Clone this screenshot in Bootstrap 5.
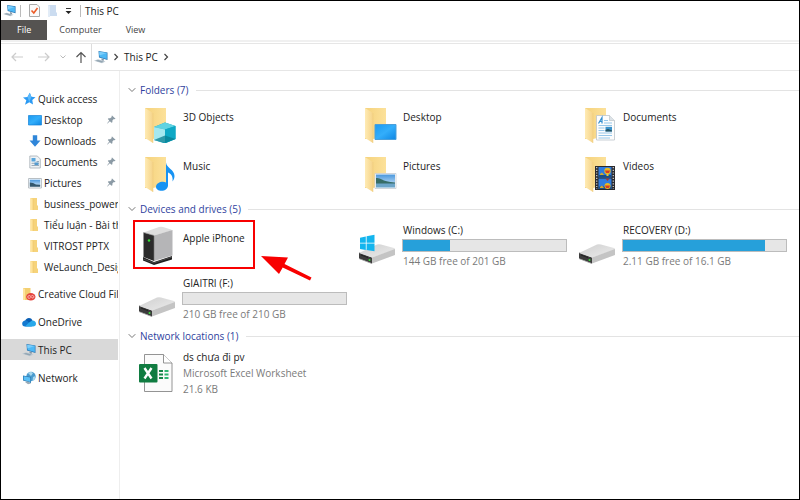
<!DOCTYPE html>
<html lang="en">
<head>
<meta charset="utf-8">
<meta name="viewport" content="width=device-width, initial-scale=1">
<title>This PC</title>
<link rel="stylesheet" href="https://cdn.jsdelivr.net/npm/bootstrap@5.3.0/dist/css/bootstrap.min.css">
<style>
body { font: 10px/14px "Open Sans", "Noto Sans", sans-serif; color: #222; background: #fff; }
svg { display: block; flex: none; }
button { font: inherit; color: inherit; background: none; border: 0; padding: 0; }
.explorer { border: 1px solid #000; }
.titlebar { height: 19px; padding-left: 2px; }
.titlebar h1 { font-size: 10px; line-height: 14px; font-weight: 400; margin: 0 0 0 4px; }
.vsep { width: 1px; height: 12px; background: #bbb; }
.ribbon { height: 22px; font-size: 9px; line-height: 18px; border-bottom: 2px solid #f0f0f0; margin-bottom: 1px; }
.ribbon .nav-link { height: 20px; padding: 1px 12px; color: #444; border-radius: 0; }
.ribbon .nav-link.active { background: #555351; color: #fff; padding: 1px 16px; }
.addressrow { height: 28px; border-top: 1px solid #e6e6e6; border-bottom: 1px solid #e6e6e6; padding-left: 9px; }
.navbuttons { width: 81px; }
.address { border-left: 1px solid #ddd; padding-left: 2px; }
.address a { color: #222; text-decoration: none; }
.tree { width: 119px; padding: 17px 1px 0 0; border-right: 1px solid #eee; }
.tree ul { list-style: none; margin: 0; padding: 0; }
.tree a { display: flex; align-items: center; height: 21px; padding-left: 21px; color: #222; text-decoration: none; white-space: nowrap; overflow: hidden; }
.tree a svg:first-child { width: 14px; height: 14px; margin-right: 2px; }
.tree li li a { padding-left: 27px; }
.tree li li a svg:first-child { margin-right: 2px; }
.tree a svg.pin { margin-left: auto; margin-right: 2px; }
.tree > ul > li + li { margin-top: 7px; }
.tree > ul > li:nth-child(2) { margin-top: 6px; }
.tree a.active { background: #d9d9d9; }
.content-pane { padding: 9px 0 0 7px; }
.group-head { height: 20px; padding-left: 1px; }
.group-head h2 { font-size: 10px; line-height: 14px; font-weight: 400; margin: 0 7px 0 4px; color: #2f3f9e; }
.group-head span { height: 1px; background: #e3e3e3; }
.tiles { display: grid; grid-template-columns: repeat(auto-fill, 220px); padding: 4px 0 5px 4px; row-gap: 8px; }
.tiles.folders { padding: 7px 0 7px 4px; row-gap: 13px; }
.tile { display: flex; position: relative; min-height: 45px; }
.folders .tile { min-height: 36px; }
.tile > svg:first-child { width: 40px; height: 40px; margin: 3px 6px 0; }
.folders .tile > svg:first-child { margin-top: 0; height: 36px; }
.folders .tile-text { padding-top: 3px; }
.phone .tile-text { padding-top: 8px; }
.usage { display: flex; flex-direction: column; gap: 2px; }
.usage .progress { width: 165px; height: 13px; margin-left: -1px; border-radius: 0; border: 1px solid #bcbcbc; background: #e6e6e6; }
.usage .progress-bar { background: #26a0da; }
.muted { color: #7a7a7a; }
.highlight { position: absolute; left: 2px; top: -3px; width: 122px; height: 49px; border: 2px solid #f80000; }
.pointer { position: absolute; left: 129px; top: 31px; }
</style>
<script src="https://cdn.jsdelivr.net/npm/bootstrap@5.3.0/dist/js/bootstrap.bundle.min.js"></script>
</head>
<body>
<svg width="0" height="0" class="position-absolute" aria-hidden="true">
  <defs>
    <linearGradient id="gBlue" x1="0" y1="0" x2="1" y2="1"><stop offset="0" stop-color="#1c9af0"/><stop offset=".5" stop-color="#33aefb"/><stop offset="1" stop-color="#0d86e3"/></linearGradient>
    <linearGradient id="gFold" x1="0" y1="0" x2="1" y2="0"><stop offset="0" stop-color="#f5d27c"/><stop offset="1" stop-color="#fce19a"/></linearGradient>
    <linearGradient id="gFlap" x1="0" y1="0" x2="1" y2="0"><stop offset="0" stop-color="#ffebb4"/><stop offset="1" stop-color="#f5d388"/></linearGradient>
    <linearGradient id="gTop" x1="0" y1="0" x2="1" y2="1"><stop offset="0" stop-color="#cfcfcf"/><stop offset="1" stop-color="#ececec"/></linearGradient>
    <linearGradient id="gSky" x1="0" y1="0" x2="0" y2="1"><stop offset="0" stop-color="#4a97dc"/><stop offset="1" stop-color="#dcefff"/></linearGradient>
  </defs>
  <symbol id="pc" viewBox="0 0 14 14"><path d="M4.500 1 13.500 2.500v7.500L5 7.500z" fill="#2b78b5"/><path d="M5.200 1.800 12.800 3.100v5.900L5.700 7z" fill="#4db8f5"/><path d="M5.200 1.800 12.800 3.100 5.400 5.600z" fill="#7ccefb"/><path d="M7.500 8.500l2.500.8L9.500 11l-2-.5z" fill="#8497a6"/><path d="M0 10.700 4 9.300l7.500 2.200L8 13.200z" fill="#bcc8d1"/><path d="M1.500 10.800 4 9.900l5.500 1.600-2 .9z" fill="#93a5b2"/></symbol>
  <symbol id="smallfolder" viewBox="0 0 14 14"><path d="M2.500 1H9v7l1 1v4H2.500z" fill="#f6d37b"/><path d="M2.500 1 5 2v11H2.500z" fill="#ffe49c"/><path d="M5 2v11" stroke="#ecc566" stroke-width=".6"/></symbol>
  <symbol id="pinsym" viewBox="0 0 10 10"><path d="M5.600.5 9.500 4.300 8.500 4.800 7.600 4.500 6 6.200 6 8 5 8.600 3.200 6.900.5 9.500 0 9.500 2.500 6.200.9 4.500 1.600 3.700 3.500 3.700 5.300 2.200 5 1.200z" fill="#8b9aa5"/></symbol>
  <symbol id="bigfolder" viewBox="0 0 40 36"><path d="M8 1h21v28l-13 3H8z" fill="url(#gFold)"/><path d="M8 1l8 5v30l-8-5z" fill="url(#gFlap)"/><path d="M16 6v30" stroke="#ecca78" stroke-width=".5"/></symbol>
  <symbol id="drive" viewBox="0 0 40 40"><path d="M2 26.500 15 31.500v6L2 32.500z" fill="#3c3c3c"/><path d="M2 27 20 18.500q2-.7 4 0L37 22q2 1 0 2L15 31.500z" fill="url(#gTop)"/><path d="M15 31.500 38 23v6L15 37.500z" fill="#c4c4c4"/><path d="M2 32.300 15 37.300v.8L2 33z" fill="#999"/><circle cx="12.500" cy="34" r="1" fill="#3be03b"/><path d="M4 29l7 2.600" stroke="#222" stroke-width="1"/></symbol>
  <symbol id="chev" viewBox="0 0 8 8"><path d="M.7 2.200 4 5.500 7.300 2.200" fill="none" stroke="#777" stroke-width="1"/></symbol>
</svg>

<div class="explorer d-flex flex-column min-vh-100">
  <header>
    <div class="titlebar d-flex align-items-center">
      <svg width="13" height="13"><use href="#pc"/></svg>
      <span class="vsep ms-1"></span>
      <div class="d-flex align-items-center ms-2">
        <button type="button" aria-label="Properties"><svg width="11" height="13"><path d="M.5.500h7.500l2.500 2.500v9.500H.5z" fill="#fafafa" stroke="#aaa"/><path d="M2.500 6.500 4.800 9 8.500 4" fill="none" stroke="#ec5b27" stroke-width="1.600"/></svg></button>
        <button type="button" class="ms-2" aria-label="New folder"><svg width="9" height="12"><path d="M0 0h8v7l1 1v3H0z" fill="#cbdcf0"/><path d="M0 0l2 1v11H0z" fill="#e2ecf7"/></svg></button>
        <button type="button" class="ms-2" aria-label="Customize toolbar"><svg width="7" height="8"><path d="M1 1.500h5" stroke="#333"/><path d="M.5 4h6l-3 3z" fill="#222"/></svg></button>
      </div>
      <span class="vsep ms-2"></span>
      <h1>This PC</h1>
    </div>
    <nav class="ribbon nav" aria-label="Ribbon">
      <a class="nav-link active" href="#">File</a>
      <a class="nav-link" href="#">Computer</a>
      <a class="nav-link" href="#">View</a>
    </nav>
    <div class="addressrow d-flex">
      <div class="navbuttons d-flex align-items-center">
        <button type="button" aria-label="Back"><svg width="14" height="12"><path d="M13 6H2M6 2 2 6l4 4" fill="none" stroke="#ccc" stroke-width="1.200"/></svg></button>
        <button type="button" class="ms-auto" aria-label="Forward"><svg width="14" height="12"><path d="M1 6h11M8 2l4 4-4 4" fill="none" stroke="#ccc" stroke-width="1.200"/></svg></button>
        <button type="button" class="ms-2" aria-label="Recent locations"><svg width="8" height="6"><path d="M1.500 1.500 4 4l2.500-2.500" fill="none" stroke="#bbb"/></svg></button>
        <button type="button" class="ms-2 me-1" aria-label="Up"><svg width="12" height="12"><path d="M6 12V1.500M1.500 6 6 1.500 10.500 6" fill="none" stroke="#555" stroke-width="1.200"/></svg></button>
      </div>
      <div class="address d-flex align-items-center flex-grow-1">
        <svg width="14" height="14"><use href="#pc"/></svg>
        <svg class="ms-1" width="8" height="8"><path d="M2.500 1 5.500 4l-3 3" fill="none" stroke="#444" stroke-width="1.200"/></svg>
        <a href="#" class="ms-1">This PC</a>
        <svg class="ms-1" width="8" height="8"><path d="M2.500 1 5.500 4l-3 3" fill="none" stroke="#444" stroke-width="1.200"/></svg>
      </div>
    </div>
  </header>

  <div class="d-flex flex-grow-1">
    <nav class="tree flex-shrink-0" aria-label="Locations">
      <ul>
        <li><a href="#"><svg viewBox="0 0 14 14"><path d="M7.800.8 9.400 4.800 13.500 5.200 10.300 8 11 12.600 7.300 10.300 3 12.800 4.300 8.300 1 5.600 5.500 5z" fill="#2b9af3"/><path d="M7.800.8 9.400 4.800 7.300 10.300 5.500 5z" fill="#5bb9fb"/></svg>Quick access</a>
          <ul>
            <li><a href="#"><svg viewBox="0 0 14 14"><path d="M.5 2.500h13v9.500H.5z" fill="url(#gBlue)" stroke="#1583d8" stroke-width=".7"/></svg>Desktop<svg class="pin" width="9" height="9"><use href="#pinsym"/></svg></a></li>
            <li><a href="#"><svg viewBox="0 0 14 14"><path d="M4.800 1.300h4.400v5.200h3.300L7 12.700 1.500 6.500h3.300z" fill="#2f86d9"/></svg>Downloads<svg class="pin" width="9" height="9"><use href="#pinsym"/></svg></a></li>
            <li><a href="#"><svg viewBox="0 0 14 14"><path d="M1.800 1h7.500l3 3v9H1.800z" fill="#eef2f5" stroke="#a4adb5" stroke-width=".8"/><path d="M3.500 3h4v3.500h-4z" fill="#5aa7dd"/><path d="M8.500 6.500h2.500M3.500 8.300h7.500M3.500 10.500h7.500" stroke="#8197a9" stroke-width=".8"/><path d="M6.500 7.500h4v2.500h-4z" fill="#549bd0"/></svg>Documents<svg class="pin" width="9" height="9"><use href="#pinsym"/></svg></a></li>
            <li><a href="#"><svg viewBox="0 0 14 14"><path d="M.6 2.500h12.800v9.500H.6z" fill="#fff" stroke="#a6aeb5" stroke-width=".8"/><path d="M1.800 3.700h10.400v7H1.800z" fill="url(#gSky)"/><path d="M1.800 6.500 5 7l3 1.500 4.200.2v2H1.800z" fill="#34576c"/></svg>Pictures<svg class="pin" width="9" height="9"><use href="#pinsym"/></svg></a></li>
            <li><a href="#"><svg><use href="#smallfolder"/></svg>business_powerp</a></li>
            <li><a href="#"><svg><use href="#smallfolder"/></svg>Tiểu luận - Bài th</a></li>
            <li><a href="#"><svg><use href="#smallfolder"/></svg>VITROST PPTX</a></li>
            <li><a href="#"><svg><use href="#smallfolder"/></svg>WeLaunch_Desig</a></li>
          </ul>
        </li>
        <li><a href="#"><svg viewBox="0 0 14 14"><path d="M1 1h7.500v7l1 1v4H1z" fill="#f3cf72"/><path d="M1 1 3 2v11H1z" fill="#ffe49c"/><ellipse cx="8.800" cy="9.800" rx="4.700" ry="3.700" fill="#e5453d"/><path d="M8.700 10.500C7.500 12 5.500 11.300 5.800 9.800s2-1.600 3-.4l1 1.200c1 .9 2.300.2 2-1s-1.600-1.500-2.500-.6" fill="none" stroke="#ffd6d2" stroke-width=".8"/></svg>Creative Cloud File</a></li>
        <li><a href="#"><svg viewBox="0 0 14 14"><path d="M3 6.500C3.500 2.500 9 1.500 10.500 5.500L7 9z" fill="#0a5fb4"/><path d="M2.800 5.500C5 5 6.500 6.500 10 11.500H3C-.8 11.500-.6 6 2.800 5.500z" fill="#1379d0"/><path d="M6.500 8 10 5.500c2.500-.2 4 1.500 4 3.200 0 1.800-1.300 2.800-3 2.800H3z" fill="#28a8ea"/></svg>OneDrive</a></li>
        <li><a href="#" class="active" aria-current="page"><svg><use href="#pc"/></svg>This PC</a></li>
        <li><a href="#"><svg viewBox="0 0 14 14"><circle cx="9" cy="5.500" r="4.700" fill="#4a9bce"/><path d="M6 2q3-2 5 0L9 5zM11 6l2.500-1-1 4-2 1z" fill="#a8d7ee"/><path d="M1 4.500 9 6v6L1 9.500z" fill="#2d78ae"/><path d="M1.700 5.300 8.300 6.600v4.300L1.700 9z" fill="#5bc0f7"/><path d="M3 11l3-.5 3 2-3 .8z" fill="#9aabb7"/></svg>Network</a></li>
      </ul>
    </nav>

    <main class="content-pane flex-grow-1">
      <section>
        <div class="group-head d-flex align-items-center"><svg width="8" height="8"><use href="#chev"/></svg><h2>Folders (7)</h2><span class="flex-grow-1"></span></div>
        <div class="tiles folders">
          <div class="tile"><svg viewBox="0 0 40 36"><use href="#bigfolder"/><path d="M17 20 28 15.500 38.500 19v13L28 36.500 17 33z" fill="#12a4bd"/><path d="M17 20 28 15.500 38.500 19 28 22.500z" fill="#5fd3e2"/><path d="M17 20 28 22.500v13L17 33z" fill="#a5e8ef"/><path d="M28 22.500 38.500 19v13L28 36z" fill="#0ea8c5"/><path d="M17 33l11-4.500L38.500 32 28 36z" fill="#087f92" opacity=".75"/></svg><div class="tile-text">3D Objects</div></div>
          <div class="tile"><svg viewBox="0 0 40 36"><use href="#bigfolder"/><path d="M18 17.500h21v15H18z" fill="url(#gBlue)" stroke="#4b9fda"/></svg><div class="tile-text">Desktop</div></div>
          <div class="tile"><svg viewBox="0 0 40 36"><use href="#bigfolder"/><path d="M19.500 8.500h13l5 5V33h-18z" fill="#fdfdfd" stroke="#bcc4ca" stroke-width=".8"/><path d="M32.500 8.500v5h5" fill="#dde3e8" stroke="#bcc4ca" stroke-width=".7"/><path d="M21.500 16.500 25 10.500v6M23 14.500h2" fill="none" stroke="#3690d0" stroke-width="1.200"/><path d="M27 13.500h4M27 16h8M21.500 18.500H35M21.500 21h6M21.500 23.500h6M21.500 26H35M21.500 28.500H35M21.500 31H33" stroke="#8bc1e8" stroke-width=".9"/><path d="M28.500 19.800H35v4.700h-6.500z" fill="#3a91c9"/><path d="M28.500 23 31 22l4 1.500v1h-6.500z" fill="#24515f"/></svg><div class="tile-text">Documents</div></div>
          <div class="tile"><svg viewBox="0 0 40 36"><use href="#bigfolder"/><path d="M29 6.500c.5 5.500 8.500 7 8.500 13.500 0 2-.8 4-2 5.500.8-5-1.500-8-4.500-9V29.500c0 3-3 5.300-6.500 5.300-3 0-5.500-1.500-5.500-4 0-3 3.500-5 7-5 1 0 2 .2 3 .6z" fill="#1793f3"/></svg><div class="tile-text">Music</div></div>
          <div class="tile"><svg viewBox="0 0 40 36"><use href="#bigfolder"/><path d="M18 17.500h21v15H18z" fill="#fff" stroke="#c5ccd2" stroke-width=".8"/><path d="M19 18.500h19v13H19z" fill="url(#gSky)"/><path d="M19 22q3-.5 6 1.500t13 3V28H19z" fill="#376d67"/><path d="M19 27.500h19v4H19z" fill="#6ca5c8"/></svg><div class="tile-text">Pictures</div></div>
          <div class="tile"><svg viewBox="0 0 40 36"><use href="#bigfolder"/><path d="M18 10h20v24H18z" fill="#2a2a2e"/><path d="M21.500 11h13v10.500h-13zM21.500 22.500h13V33h-13z" fill="#2f7ce0"/><path d="M21.500 19h13v2.500h-13zM21.500 30.500h13V33h-13z" fill="#1b4e86"/><circle cx="30.500" cy="15" r="3.200" fill="#e6b821"/><path d="M28 14.500h5l-1 2.500h-3z" fill="#d53a28"/><path d="M29.500 18h2v2h-2z" fill="#e9c92c"/><circle cx="30.500" cy="30" r="3" fill="#e6b821"/><path d="M28 29.500h5l-1 2.500h-3z" fill="#d53a28"/><path d="M28.500 22.500h4l-2 2.500z" fill="#a9372d"/><path d="M23 18l2-1.500 2 2.500h-4zM23 31l2-1.500 2 2.500h-4z" fill="#d4a92d"/><path d="M19.700 11v22M36.300 11v22" stroke="#ccc" stroke-width="1.300" stroke-dasharray="1.200 1.500"/></svg><div class="tile-text">Videos</div></div>
        </div>
      </section>

      <section>
        <div class="group-head d-flex align-items-center"><svg width="8" height="8"><use href="#chev"/></svg><h2>Devices and drives (5)</h2><span class="flex-grow-1"></span></div>
        <div class="tiles">
          <div class="tile phone"><svg viewBox="0 0 40 40"><path d="M6 31l11 5 18-6v3.500L17 39 6 34.500z" fill="#1f1f1f"/><path d="M6 33l11 4 18-6" fill="none" stroke="#666" stroke-width=".6"/><path d="M6.500 6.500 17 9.500V35L6.500 31z" fill="#2b2b2b"/><path d="M6.500 6.500 22 1q2-.5 4 0l8 2.500q1.500.5 0 1.200L17 9.500z" fill="#dedede"/><path d="M17 9.500 35.500 4v25.500L17 35z" fill="#b5b5b7"/><path d="M6.500 6.500 17 9.500V35" fill="none" stroke="#777" stroke-width=".6"/><circle cx="12" cy="14.500" r="1.200" fill="#35e535"/></svg><div class="tile-text">Apple iPhone</div>
            <div class="highlight"></div>
            <svg class="pointer" width="54" height="30"><path d="M1 2 28 3.500 24.500 10 51.500 23.500 50 26.500 22.700 13.500 19 20z" fill="#f80000"/></svg>
          </div>
          <div class="tile"><svg viewBox="0 0 40 40"><use href="#drive"/><path d="M3 11.700 8.800 10.500v6.300H3zM9.600 10.300 17.500 8.800v8H9.600zM3 17.600h5.800v6.300L3 22.900zM9.600 17.600h7.900v7.700l-7.900-1.300z" fill="#14b5ee"/></svg>
            <div class="usage"><div>Windows (C:)</div><div class="progress" role="progressbar" aria-label="Windows (C:) used space" aria-valuenow="29" aria-valuemin="0" aria-valuemax="100"><div class="progress-bar" style="width:29%"></div></div><div class="muted">144 GB free of 201 GB</div></div></div>
          <div class="tile"><svg viewBox="0 0 40 40"><use href="#drive"/></svg>
            <div class="usage"><div>RECOVERY (D:)</div><div class="progress" role="progressbar" aria-label="RECOVERY (D:) used space" aria-valuenow="87" aria-valuemin="0" aria-valuemax="100"><div class="progress-bar" style="width:87%"></div></div><div class="muted">2.11 GB free of 16.1 GB</div></div></div>
          <div class="tile"><svg viewBox="0 0 40 40"><use href="#drive"/></svg>
            <div class="usage"><div>GIAITRI (F:)</div><div class="progress" role="progressbar" aria-label="GIAITRI (F:) used space" aria-valuenow="0" aria-valuemin="0" aria-valuemax="100"><div class="progress-bar" style="width:0%"></div></div><div class="muted">210 GB free of 210 GB</div></div></div>
        </div>
      </section>

      <section>
        <div class="group-head d-flex align-items-center"><svg width="8" height="8"><use href="#chev"/></svg><h2>Network locations (1)</h2><span class="flex-grow-1"></span></div>
        <div class="tiles">
          <div class="tile"><svg viewBox="0 0 40 40"><path d="M7.500 1.500h19l8.500 8.500v28.500H7.500z" fill="#fbfbfb" stroke="#888" stroke-width=".9"/><path d="M26.500 1.500V10H35" fill="#fff" stroke="#888" stroke-width=".9"/><path d="M22 17h4v2h-4zM22 20.500h4v2h-4zM22 24h4v2h-4z" fill="#17864a"/><path d="M27.500 17h4v2h-4zM27.500 20.500h4v2h-4zM27.500 24h4v2h-4z" fill="#2fb573"/><rect x="2" y="11" width="18.500" height="18.500" rx="1" fill="#107c41"/><path d="M7.500 15 14.500 25.500M14.500 15 7.500 25.500" stroke="#fff" stroke-width="2.400"/></svg>
            <div class="usage"><div>ds chưa đi pv</div><div class="muted">Microsoft Excel Worksheet</div><div class="muted">21.6 KB</div></div></div>
        </div>
      </section>
    </main>
  </div>
</div>
</body>
</html>
